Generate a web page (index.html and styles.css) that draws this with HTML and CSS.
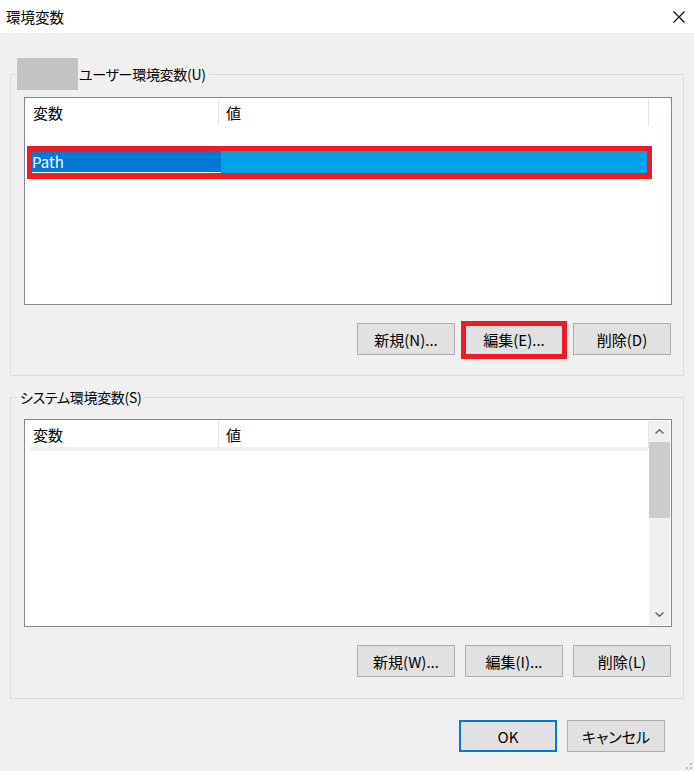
FILE: index.html
```html
<!DOCTYPE html>
<html lang="ja">
<head>
<meta charset="utf-8">
<title>環境変数</title>
<link rel="stylesheet" href="styles.css">
</head>
<body>
<div class="window">
  <header class="titlebar">
    <span class="title">環境変数</span>
    <svg class="close" viewBox="0 0 12 12" width="12" height="12"><path d="M0.5 0.5L11.5 11.5M11.5 0.5L0.5 11.5" stroke="#000" stroke-width="1.1" fill="none"/></svg>
  </header>
  <main class="client">
    <fieldset class="group">
      <legend><span class="redact"></span>ユーザー環境変数(U)</legend>
      <div class="listview">
        <div class="lv-header">
          <div class="col col-name">変数</div>
          <div class="col col-value">値</div>
        </div>
        <div class="lv-row-selected">
          <div class="cell-name">Path</div>
          <div class="cell-value"></div>
        </div>
      </div>
      <div class="buttons">
        <button class="btn">新規(N)...</button>
        <button class="btn btn-marked">編集(E)...</button>
        <button class="btn">削除(D)</button>
      </div>
    </fieldset>
    <fieldset class="group group-system">
      <legend>システム環境変数(S)</legend>
      <div class="listview listview-system">
        <div class="lv-main">
          <div class="lv-header">
            <div class="col col-name">変数</div>
            <div class="col col-value">値</div>
          </div>
          <div class="lv-band"></div>
        </div>
        <div class="scrollbar">
          <div class="sb-btn"><svg viewBox="0 0 9 5" width="9" height="5"><path d="M0.5 4.5L4.5 0.8L8.5 4.5" stroke="#606060" stroke-width="1.4" fill="none"/></svg></div>
          <div class="sb-thumb"></div>
          <div class="sb-track"></div>
          <div class="sb-btn"><svg viewBox="0 0 9 5" width="9" height="5"><path d="M0.5 0.5L4.5 4.2L8.5 0.5" stroke="#606060" stroke-width="1.4" fill="none"/></svg></div>
        </div>
      </div>
      <div class="buttons">
        <button class="btn">新規(W)...</button>
        <button class="btn">編集(I)...</button>
        <button class="btn">削除(L)</button>
      </div>
    </fieldset>
    <div class="footer">
      <button class="btn btn-default">OK</button>
      <button class="btn">キャンセル</button>
    </div>
  </main>
  <svg class="grip" viewBox="0 0 10 10" width="10" height="10"><rect x="6" y="2" width="2" height="2" fill="#bcbcbc"/><rect x="2" y="6" width="2" height="2" fill="#bcbcbc"/><rect x="6" y="6" width="2" height="2" fill="#bcbcbc"/></svg>
</div>
</body>
</html>
```
FILE: styles.css
```css
* { box-sizing: border-box; }
html, body { margin: 0; padding: 0; }
body {
  width: 694px;
  height: 771px;
  overflow: hidden;
  background: #f0f0f0;
  font-family: "Noto Sans CJK JP", "Noto Sans", sans-serif;
  font-size: 15px;
  font-feature-settings: "palt";
  color: #000;
}
.window { position: relative; width: 694px; height: 771px; }
.titlebar {
  height: 33px;
  background: #fff;
  display: flex;
  align-items: center;
  justify-content: space-between;
  padding: 0 9px 0 6px;
}
.title { line-height: 20px; font-size: 14.5px; }
.close { display: block; }
.client { padding-left: 10px; }
.group {
  width: 674px;
  margin: 31px 0 0 0;
  padding: 13px 11px 20px 13px;
  border: 1px solid #dcdcdc;
  min-width: 0;
}
.group legend {
  padding: 0 3px;
  margin-left: -7px;
  line-height: 20px;
  height: 20px;
  font-size: 14px;
  letter-spacing: -0.3px;
}
.redact {
  display: inline-block;
  width: 61px;
  height: 32px;
  margin: -6px 1px -6px -3px;
  vertical-align: top;
  background: #c3c3c3;
}
.group-system { margin-top: 11px; padding-top: 12px; padding-bottom: 21px; }
.listview {
  width: 648px;
  height: 208px;
  background: #fff;
  border: 1px solid #828790;
}
.lv-header {
  display: flex;
  align-items: flex-start;
  height: 28px;
}
.col {
  height: 27px;
  margin-top: 1px;
  line-height: 27px;
  border-right: 1px solid #e5e5e5;
}
.col-name { width: 194px; padding-left: 8px; }
.col-value { width: 430px; padding-left: 7px; }
.lv-row-selected {
  position: relative;
  display: flex;
  margin: 25px 0 0 7px;
  width: 615px;
  height: 22px;
}
.lv-row-selected::after {
  content: "";
  position: absolute;
  left: -5px;
  right: -5px;
  top: -5px;
  bottom: -6px;
  border: 5px solid #ed1c24;
  border-bottom-width: 6px;
}
.cell-name {
  width: 189px;
  background: #0078d7;
  color: #fff;
  border-bottom: 1px solid #fff;
  line-height: 21px;
}
.cell-value { flex: 1; background: #00a2e8; }
.listview-system { display: flex; }
.lv-main { flex: 0 0 624px; }
.lv-band {
  margin: -1px 0 0 5px;
  width: 618px;
  height: 4px;
  background: #f0f0f0;
}
.scrollbar {
  width: 21px;
  margin: 1px 1px 1px 0;
  background: #f0f0f0;
  display: flex;
  flex-direction: column;
}
.sb-btn {
  height: 21px;
  display: flex;
  align-items: center;
  justify-content: center;
}
.sb-btn svg { display: block; }
.sb-thumb { height: 76px; background: #cdcdcd; }
.sb-track { flex: 1; }
.buttons {
  display: flex;
  justify-content: flex-end;
  gap: 10px;
  width: 648px;
  padding-right: 1px;
  margin-top: 18px;
}
.btn {
  width: 98px;
  height: 32px;
  padding: 0;
  background: #e1e1e1;
  border: 1px solid #adadad;
  font: inherit;
  color: #000;
  display: flex;
  align-items: center;
  justify-content: center;
  position: relative;
}
.btn-marked::after {
  content: "";
  position: absolute;
  left: -5px;
  right: -5px;
  top: -3px;
  bottom: -5px;
  border: 5px solid #ed1c24;
}
.btn-default { border: 2px solid #0078d7; }
.footer {
  display: flex;
  justify-content: flex-end;
  gap: 10px;
  margin-top: 21px;
  padding-right: 29px;
}
.grip { position: absolute; right: 0; bottom: 0; display: block; }
```
